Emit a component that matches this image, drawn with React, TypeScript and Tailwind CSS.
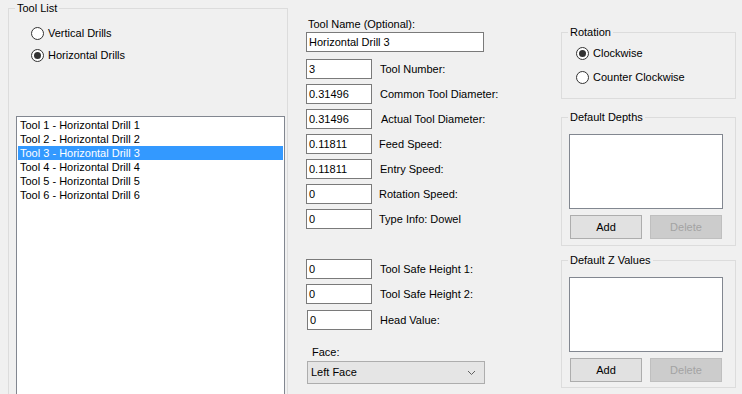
import { useState } from "react";

const tools = [
  "Tool 1 - Horizontal Drill 1",
  "Tool 2 - Horizontal Drill 2",
  "Tool 3 - Horizontal Drill 3",
  "Tool 4 - Horizontal Drill 4",
  "Tool 5 - Horizontal Drill 5",
  "Tool 6 - Horizontal Drill 6",
];

const fields = [
  { value: "3", label: "Tool Number:", shift: "ml-[8px]" },
  { value: "0.31496", label: "Common Tool Diameter:", shift: "ml-[8px]" },
  { value: "0.31496", label: "Actual Tool Diameter:", shift: "ml-[9px]" },
  { value: "0.11811", label: "Feed Speed:", shift: "ml-[7px]" },
  { value: "0.11811", label: "Entry Speed:", shift: "ml-[8px]" },
  { value: "0", label: "Rotation Speed:", shift: "ml-[7px]" },
  { value: "0", label: "Type Info: Dowel", shift: "ml-[7px]" },
];

function Radio({ checked, label, onClick }: { checked: boolean; label: string; onClick: () => void }) {
  return (
    <div className="flex items-center h-[13px] cursor-default" onClick={onClick}>
      <span className="w-[13px] h-[13px] rounded-full border border-[#333333] bg-white flex items-center justify-center">
        {checked && <span className="w-[7px] h-[7px] rounded-full bg-[#333333]" />}
      </span>
      <span className="ml-[4px] leading-[13px] whitespace-nowrap">{label}</span>
    </div>
  );
}

function TextBox({ value, className }: { value: string; className: string }) {
  return (
    <div className={`h-[20px] shrink-0 border border-[#7a7a7a] bg-white pl-[2px] leading-[18px] ${className}`}>
      {value}
    </div>
  );
}

function Group({ title, className, children }: { title: string; className: string; children: React.ReactNode }) {
  return (
    <fieldset className={`border border-[#dcdcdc] ${className}`}>
      <legend className="ml-[6px] px-[2px] leading-[13px]">{title}</legend>
      {children}
    </fieldset>
  );
}

function ListPanel({ title, className }: { title: string; className: string }) {
  return (
    <Group title={title} className={className}>
      <div className="ml-[7px] mt-[10px] w-[154px] h-[75px] border border-[#828790] bg-white" />
      <div className="flex ml-[8px] mt-[6px] gap-[8px]">
        <button className="w-[72px] h-[24px] border border-[#adadad] bg-[#e1e1e1] leading-[22px]">Add</button>
        <button className="w-[72px] h-[24px] border border-[#bfbfbf] bg-[#cccccc] text-[#a3a3a3] leading-[22px]">
          Delete
        </button>
      </div>
    </Group>
  );
}

export default function App() {
  const [kind, setKind] = useState<"vertical" | "horizontal">("horizontal");
  const [clockwise, setClockwise] = useState(true);
  const [selected, setSelected] = useState(2);

  return (
    <div
      className="w-[742px] h-[394px] overflow-hidden bg-[#f0f0f0] text-[11px] text-black flex"
      style={{ fontFamily: '"Liberation Sans", Arial, sans-serif' }}
    >
      {/* Tool list */}
      <Group title="Tool List" className="ml-[8px] mt-[2px] w-[280px] h-[420px] shrink-0">
        <div className="ml-[22px] mt-[12px] flex flex-col gap-[9px]">
          <Radio checked={kind === "vertical"} label="Vertical Drills" onClick={() => setKind("vertical")} />
          <Radio checked={kind === "horizontal"} label="Horizontal Drills" onClick={() => setKind("horizontal")} />
        </div>
        <div className="ml-[7px] mt-[54px] w-[269px] h-[300px] border border-[#828790] bg-white pt-[1px] px-[1px]">
          {tools.map((t, i) => (
            <div
              key={t}
              onClick={() => setSelected(i)}
              className={`h-[14px] leading-[14px] pl-[2px] whitespace-nowrap ${i === selected ? "bg-[#3399ff] text-white" : ""}`}
            >
              {t}
            </div>
          ))}
        </div>
      </Group>

      {/* Tool details */}
      <div className="ml-[18px] w-[180px] shrink-0 flex flex-col">
        <div className="mt-[18px] ml-[2px] leading-[13px]">Tool Name (Optional):</div>
        <TextBox value="Horizontal Drill 3" className="mt-[1px] w-[178px]" />
        <div className="mt-[7px] flex flex-col gap-[5px]">
          {fields.map((f, i) => (
            <div key={i} className="flex items-center whitespace-nowrap">
              <TextBox value={f.value} className="w-[66px]" />
              <span className={f.shift}>{f.label}</span>
            </div>
          ))}
        </div>
        <div className="mt-[30px] flex flex-col gap-[5px] whitespace-nowrap">
          <div className="flex items-center">
            <TextBox value="0" className="w-[66px]" />
            <span className="ml-[8px]">Tool Safe Height 1:</span>
          </div>
          <div className="flex items-center">
            <TextBox value="0" className="w-[66px]" />
            <span className="ml-[8px]">Tool Safe Height 2:</span>
          </div>
          <div className="flex items-center mt-[1px]">
            <TextBox value="0" className="ml-[1px] w-[65px]" />
            <span className="ml-[8px]">Head Value:</span>
          </div>
        </div>
        <div className="mt-[16px] ml-[6px] leading-[13px]">Face:</div>
        <div className="mt-[2px] ml-[1px] w-[178px] h-[23px] border border-[#adadad] bg-[#e5e5e5] flex items-center justify-between pl-[3px] pr-[8px]">
          <span>Left Face</span>
          <svg width="9" height="6" viewBox="0 0 9 6" fill="none" stroke="#606060" strokeWidth="1">
            <path d="M1 1l3.5 3.5L8 1" />
          </svg>
        </div>
      </div>

      {/* Right side */}
      <div className="ml-[75px] w-[175px] shrink-0 flex flex-col">
        <Group title="Rotation" className="mt-[26px] h-[73px]">
          <div className="ml-[14px] mt-[8px] flex flex-col gap-[11px]">
            <Radio checked={clockwise} label="Clockwise" onClick={() => setClockwise(true)} />
            <Radio checked={!clockwise} label="Counter Clockwise" onClick={() => setClockwise(false)} />
          </div>
        </Group>
        <ListPanel title="Default Depths" className="mt-[12px] h-[135px]" />
        <ListPanel title="Default Z Values" className="mt-[8px] h-[134px]" />
      </div>
    </div>
  );
}
